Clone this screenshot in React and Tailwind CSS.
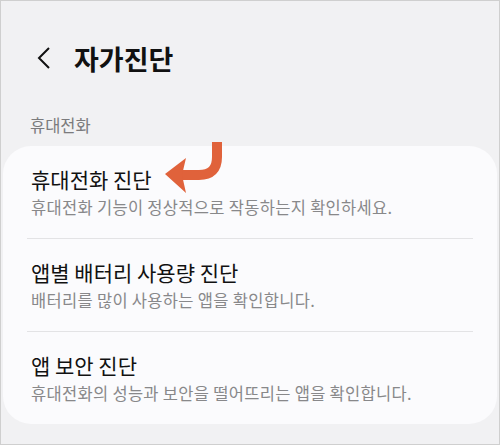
const font = { fontFamily: '"Noto Sans CJK KR", "Noto Sans", sans-serif' };

const items = [
  { title: "휴대전화 진단", desc: "휴대전화 기능이 정상적으로 작동하는지 확인하세요." },
  { title: "앱별 배터리 사용량 진단", desc: "배터리를 많이 사용하는 앱을 확인합니다." },
  { title: "앱 보안 진단", desc: "휴대전화의 성능과 보안을 떨어뜨리는 앱을 확인합니다." },
];

function Arrow() {
  return (
    <svg className="absolute left-[160px] top-[138px]" width="70" height="60" viewBox="160 138 70 60">
      <path d="M216 141 V156 Q216 174 198 174 H180" fill="none" stroke="#e0623b" strokeWidth="10" />
      <polygon points="164,173 185,157 181,174 185,192" fill="#e0623b" />
    </svg>
  );
}

export default function App() {
  return (
    <div className="relative w-[500px] h-[445px] bg-[#f1f1f3] border border-[#cfcfcf] overflow-hidden" style={font}>
      <div className="flex items-center h-[60px] mt-[28px] pl-[36px]">
        <svg width="14" height="24" viewBox="0 0 14 24" className="mr-[23px] -mt-[3px]">
          <path d="M12 2 L2 12 L12 22" fill="none" stroke="#111" strokeWidth="2" />
        </svg>
        <h1 className="text-[27px] font-bold text-[#111]">자가진단</h1>
      </div>
      <p className="mt-[25px] ml-[29px] text-[16.5px] text-[#7b7b7d] leading-[22px]">휴대전화</p>
      <div className="mt-[10px] mx-[2px] bg-[#fbfbfd] rounded-[28px] px-[24px]">
        {items.map((it, i) => (
          <div key={it.title} className={i < items.length - 1 ? "border-b border-[#e3e3e5]" : ""}>
            <div className="pl-[4px] pt-[19px] pb-[20px]">
              <p className="text-[21px] text-[#111] leading-[28px]">{it.title}</p>
              <p className="mt-[3px] text-[16.5px] tracking-[0.3px] text-[#88888a] leading-[22px]">{it.desc}</p>
            </div>
          </div>
        ))}
      </div>
      <Arrow />
    </div>
  );
}
